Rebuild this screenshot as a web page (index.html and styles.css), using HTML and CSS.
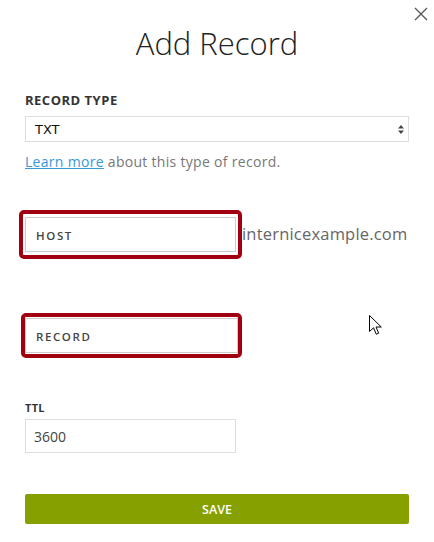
FILE: index.html
```html
<!DOCTYPE html>
<html lang="en">
<head>
    <meta charset="UTF-8">
    <meta name="viewport" content="width=device-width, initial-scale=1.0">
    <title>Add Record</title>
    <link rel="stylesheet" href="styles.css">
</head>
<body>
    <div class="modal">
        <button class="close" aria-label="Close">
            <svg width="14" height="14" viewBox="0 0 14 14"><path d="M1 1L13 13M13 1L1 13" stroke="#555" stroke-width="1.3" fill="none"/></svg>
        </button>

        <h1>Add Record</h1>

        <div class="group">
            <label class="label">RECORD TYPE</label>
            <div class="select">
                <span>TXT</span>
                <svg class="arrows" width="6" height="9" viewBox="0 0 6 9"><path d="M3 0L6 3.5H0Z M3 9L6 5.5H0Z" fill="#444"/></svg>
            </div>
            <p class="help"><a href="#">Learn more</a> about this type of record.</p>
        </div>

        <div class="host-row">
            <div class="highlight">
                <input type="text" class="field caps" placeholder="HOST">
            </div>
            <span class="domain">internicexample.com</span>
        </div>

        <div class="record-row">
            <div class="highlight">
                <input type="text" class="field caps" placeholder="RECORD">
            </div>
        </div>

        <div class="group ttl-group">
            <label class="label small">TTL</label>
            <input type="text" class="field ttl" value="3600">
        </div>

        <button class="save">SAVE</button>

        <svg class="cursor" width="13" height="20" viewBox="0 0 13 20"><path d="M0.5 0.5V16.5L4.5 12.8L7.3 19.2L9.7 18.2L7 12H12.3Z" fill="#fff" stroke="#000" stroke-width="1"/></svg>
    </div>
</body>
</html>
```

FILE: styles.css
```css
body {
    margin: 0;
    padding: 0;
    background-color: #fff;
    font-family: 'Open Sans', 'DejaVu Sans', sans-serif;
    color: #333;
}
.modal {
    position: relative;
    width: 434px;
    height: 542px;
    box-sizing: border-box;
    padding: 0 25px;
}
.close {
    position: absolute;
    top: 7px;
    right: 6px;
    background: none;
    border: none;
    padding: 0;
    width: 14px;
    height: 14px;
    cursor: pointer;
}
.close svg {
    display: block;
}
h1 {
    margin: 0;
    padding-top: 25px;
    text-align: center;
    font-size: 31px;
    font-weight: 300;
    color: #222;
    line-height: 36px;
}
.group {
    margin-top: 31px;
}
.label {
    display: block;
    font-size: 13px;
    font-weight: 700;
    letter-spacing: 0.5px;
    color: #333;
    line-height: 16px;
}
.label.small {
    font-size: 11px;
    letter-spacing: 0.3px;
    line-height: 12px;
}
.select {
    margin-top: 8px;
    height: 26px;
    border: 1px solid #ddd;
    box-sizing: border-box;
    display: flex;
    align-items: center;
    justify-content: space-between;
    padding: 0 4px 0 9px;
    font-family: 'DejaVu Sans', sans-serif;
    font-size: 13px;
    color: #111;
}
.help {
    margin: 11px 0 0;
    font-size: 14px;
    letter-spacing: 0.3px;
    line-height: 18px;
    color: #777;
}
.help a {
    color: #3a98d8;
}
.host-row {
    margin-top: 39px;
    margin-left: -6px;
    display: flex;
    align-items: center;
}
.record-row {
    margin-top: 54px;
    margin-left: -4px;
}
.highlight {
    display: inline-block;
    border: 4px solid #a0000f;
    border-radius: 5px;
    padding: 3px 2px;
    background: #fff;
}
.field {
    display: block;
    box-sizing: border-box;
    width: 211px;
    height: 35px;
    border: 1px solid #ccc;
    padding: 0 10px;
    font-family: 'Open Sans', sans-serif;
    font-size: 14px;
    color: #444;
    outline: none;
}
.caps::placeholder {
    color: #444;
    font-size: 11.5px;
    font-weight: 600;
    letter-spacing: 1.6px;
}
.record-row .highlight {
    padding: 1px 0;
}
.record-row .field {
    width: 213px;
}
.domain {
    font-size: 16.5px;
    letter-spacing: 0.2px;
    color: #666;
    margin-left: 0;
    margin-bottom: 2px;
}
.ttl-group {
    margin-top: 44px;
}
.ttl {
    margin-top: 5px;
    height: 34px;
    border-color: #ddd;
    padding: 0 8px;
    color: #444;
}
.save {
    display: block;
    width: 100%;
    margin-top: 41px;
    height: 30px;
    border: none;
    border-radius: 2px;
    background-color: #86a000;
    color: #fff;
    font-family: 'Open Sans', sans-serif;
    font-weight: 600;
    font-size: 12.5px;
    cursor: pointer;
}
.cursor {
    position: absolute;
    left: 369px;
    top: 315px;
}
```
